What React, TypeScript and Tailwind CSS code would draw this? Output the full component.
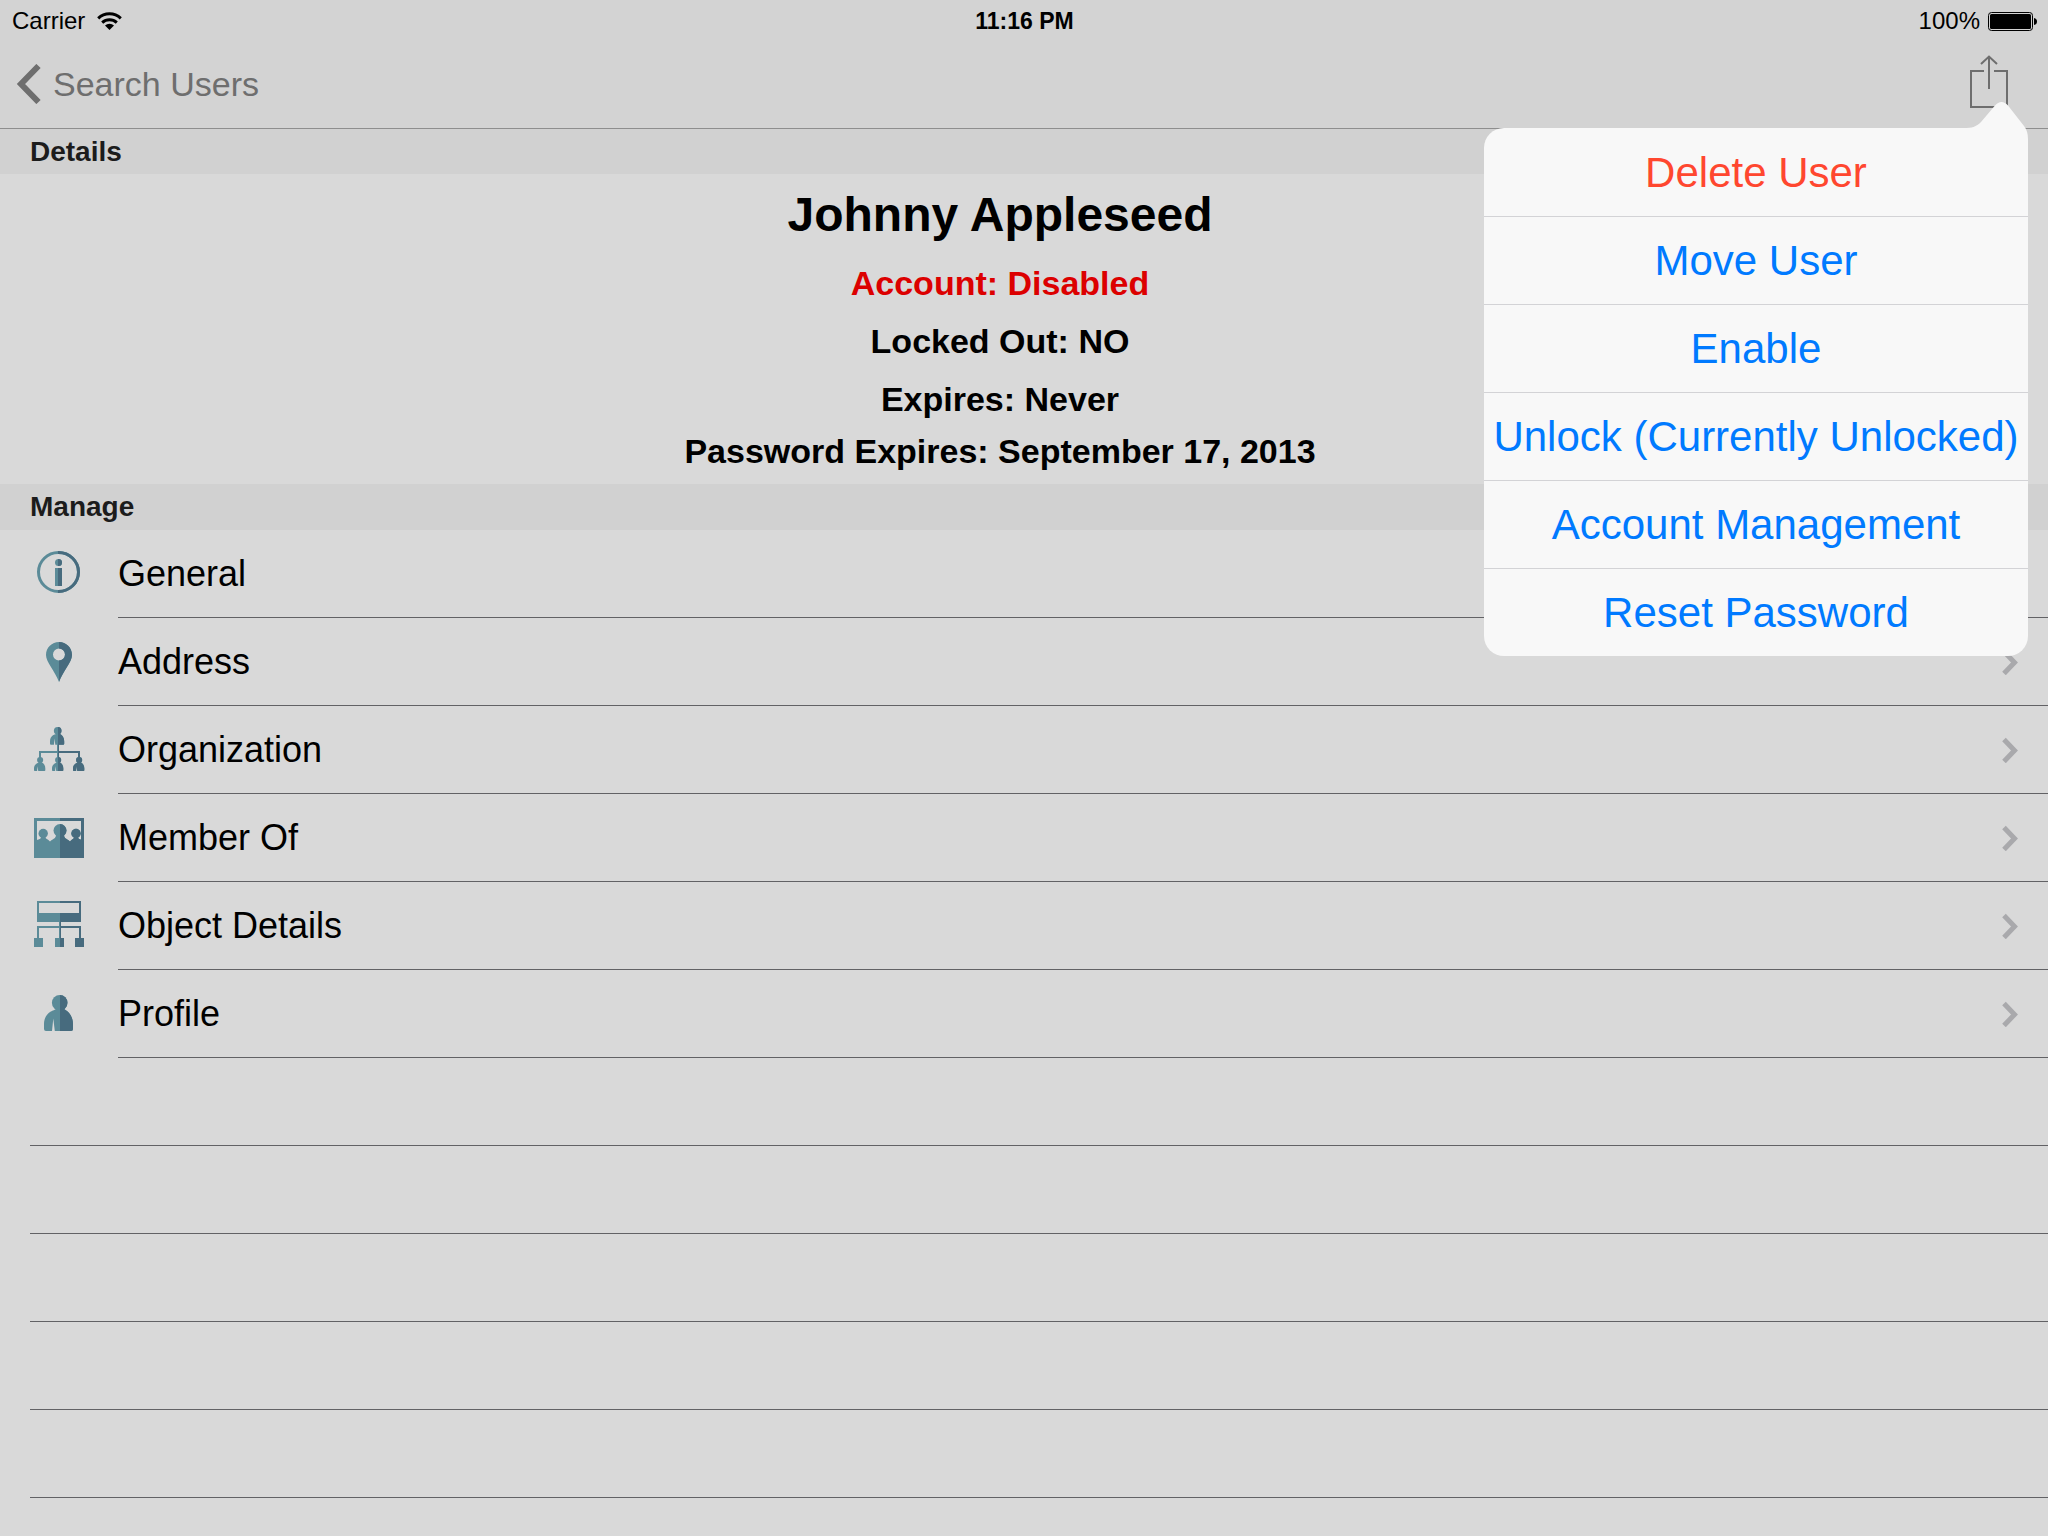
import { ReactNode } from "react";
import clsx from "clsx";

interface Action {
  label: string;
  destructive?: boolean;
}

interface Row {
  label: string;
  href: string;
  icon: ReactNode;
}

const TEAL = "#5b8b98";
const SLATE = "#476b7e";

// Draws its children in teal, then repaints everything right of `split` in slate
function TwoTone({ id, split, children }: { id: string; split: number; children: ReactNode }) {
  return (
    <svg width="50" height="50" viewBox="0 0 50 50" aria-hidden="true" className="shrink-0 overflow-visible">
      <clipPath id={id}>
        <rect x={split} y="-2" width="52" height="54" />
      </clipPath>
      <g fill={TEAL} stroke={TEAL} strokeWidth="0">{children}</g>
      <g clipPath={`url(#${id})`}>
        <g fill={SLATE} stroke={SLATE} strokeWidth="0">{children}</g>
      </g>
    </svg>
  );
}

function Person({ x, y, scale = 1 }: { x: number; y: number; scale?: number }) {
  return (
    <g transform={`translate(${x} ${y}) scale(${scale})`}>
      <circle cx="15.7" cy="7.7" r="7.8" />
      <path d="M11.5 12C13 15 9 15 6 17C2 20 0 24 0 29V34Q0 36 2 36H8L9.3 23.5L10.8 36H27Q29 36 29 34V29C29 22 25 17 21.5 15Q19 14 20 12Z" />
    </g>
  );
}

const rows: Row[] = [
  {
    label: "General",
    href: "#general",
    icon: (
      <TwoTone id="general" split={24}>
        <ellipse cx="24.5" cy="23" rx="20" ry="19.5" fill="none" strokeWidth="3" />
        <circle cx="24.5" cy="13.5" r="3.5" />
        <rect x="21" y="19" width="7" height="18" />
      </TwoTone>
    ),
  },
  {
    label: "Address",
    href: "#address",
    icon: (
      <TwoTone id="address" split={25}>
        <path
          fillRule="evenodd"
          d="M25 5C32 5 38 10.500 38 18C38 25 29 34 25 45C21 34 12 25 12 18C12 10.500 18 5 25 5ZM25 11.500A6 6 0 1 0 25 23.500A6 6 0 1 0 25 11.500Z"
        />
      </TwoTone>
    ),
  },
  {
    label: "Organization",
    href: "#organization",
    icon: (
      <TwoTone id="organization" split={24}>
        <Person x={16} y={2} scale={0.49} />
        <rect x="23" y="19" width="2" height="14" />
        <path d="M5 33V26H46V33H44V28H7V33Z" />
        <Person x={0} y={32} scale={0.39} />
        <Person x={18} y={32} scale={0.39} />
        <Person x={39} y={32} scale={0.39} />
      </TwoTone>
    ),
  },
  {
    label: "Member Of",
    href: "#member-of",
    icon: (
      <TwoTone id="member" split={26}>
        <path fillRule="evenodd" d="M0 5H50V45H0ZM3 8V42H47V8Z" />
        <circle cx="26" cy="17.500" r="6.500" />
        <circle cx="9.200" cy="20.500" r="4.700" />
        <circle cx="42" cy="20.500" r="4.700" />
        <path d="M3 27C5 26 7 26 7 24H11.500C11.500 26 14 26 16 28.500C18 26 22 26 22 22H30C30 26 34 26 36 28.500C38 26 40 26 40 24H44C44 26 46 26 48 27V45H3Z" />
      </TwoTone>
    ),
  },
  {
    label: "Object Details",
    href: "#object-details",
    icon: (
      <TwoTone id="object" split={26}>
        <path fillRule="evenodd" d="M3 0H47V21H3ZM5 2V12H45V2Z" />
        <rect x="25" y="21" width="2" height="17" />
        <path d="M3 38V25H47V38H45V27H5V38Z" />
        <rect x="0" y="37" width="9" height="9" />
        <rect x="21" y="37" width="9" height="9" />
        <rect x="41" y="37" width="9" height="9" />
      </TwoTone>
    ),
  },
  {
    label: "Profile",
    href: "#profile",
    icon: (
      <TwoTone id="profile" split={26}>
        <Person x={10} y={6} />
      </TwoTone>
    ),
  },
];

const actions: Action[] = [
  { label: "Delete User", destructive: true },
  { label: "Move User" },
  { label: "Enable" },
  { label: "Unlock (Currently Unlocked)" },
  { label: "Account Management" },
  { label: "Reset Password" },
];

const emptyRows = [1, 2, 3, 4, 5];

function StatusBar() {
  return (
    <div className="grid h-10 grid-cols-3 items-center pt-0.5 pr-[11px] pl-3 text-2xl leading-8">
      <div className="flex items-center gap-3">
        <span>Carrier</span>
        <svg width="25" height="18" viewBox="0 0 25 18" aria-hidden="true">
          <path d="M1.200 6.300A16.500 16.500 0 0 1 23.800 6.300" fill="none" stroke="#000" strokeWidth="3" />
          <path d="M5.200 10.600A10.800 10.800 0 0 1 19.800 10.600" fill="none" stroke="#000" strokeWidth="3" />
          <path d="M8 13.600A6.600 6.600 0 0 1 17 13.600L12.500 18Z" />
        </svg>
      </div>
      <span className="text-center text-[23px] font-bold">11:16 PM</span>
      <div className="flex items-center justify-end gap-2">
        <span>100%</span>
        <svg width="49" height="19" viewBox="0 0 49 19" aria-hidden="true">
          <rect x="0.500" y="0.500" width="44" height="18" rx="3" fill="none" stroke="#000" />
          <rect x="2" y="2" width="41" height="15" rx="1.500" />
          <path d="M46 6Q49 6.500 49 9.500T46 13Z" />
        </svg>
      </div>
    </div>
  );
}

function SectionHeader({ title, ruled }: { title: string; ruled?: boolean }) {
  return (
    <h2
      className={clsx(
        "flex h-[46px] items-center bg-[#d1d1d1] px-[30px] text-[28px] font-bold text-[#1c1c1c]",
        ruled && "border-t border-[#8e8e8e]"
      )}
    >
      {title}
    </h2>
  );
}

function ActionMenu() {
  return (
    <div className="absolute top-full right-5 z-10 w-[544px] rounded-[20px] bg-[#f8f8f8]">
      <svg width="64" height="48" viewBox="0 0 64 48" aria-hidden="true" className="absolute right-0 -top-[26px]">
        <path d="M0 26C8 26 12 25 17 20L31 3.500Q34 0 37.500 0Q41 0 44 3.500L60 24Q64 29 64 37V48H0Z" fill="#f8f8f8" />
      </svg>
      <div role="menu" aria-label="User actions" className="relative">
        {actions.map((a) => (
          <button
            key={a.label}
            type="button"
            role="menuitem"
            className={clsx(
              "block h-[88px] w-full border-t border-[#d3d3d6] text-center text-[42px] whitespace-nowrap first:border-transparent",
              a.destructive ? "text-[#ff472f]" : "text-[#007aff]"
            )}
          >
            {a.label}
          </button>
        ))}
      </div>
    </div>
  );
}

export default function App() {
  return (
    <div className="min-h-screen bg-[#d9d9d9] font-['Liberation_Sans',Arial,sans-serif] text-black">
      <header className="relative bg-[#d3d3d3]">
        <StatusBar />
        <nav className="flex h-[88px] items-center justify-between pr-10 pl-4">
          <a href="#search" className="flex items-center gap-3 text-[34px] text-[#6e6e6e]">
            <svg width="25" height="40" viewBox="0 0 25 40" aria-hidden="true">
              <path d="M22.500 2L5 20L22.500 38" fill="none" stroke="currentColor" strokeWidth="6" />
            </svg>
            Search Users
          </a>
          <button type="button" aria-label="Actions" className="text-[#6e6e6e]">
            <svg width="38" height="58" viewBox="0 0 38 58" fill="none" stroke="currentColor" strokeWidth="2">
              <path d="M14 16H1V52H37V16H24" />
              <path d="M19 34V1.500M11 9L19 1.500L27 9" />
            </svg>
          </button>
        </nav>
        <ActionMenu />
      </header>

      <main>
        <SectionHeader title="Details" ruled />
        <section className="pt-0.5 pr-12 pb-[10px] text-center text-[34px] leading-[58px] font-bold">
          <h1 className="text-5xl leading-[78px]">Johnny Appleseed</h1>
          <p className="text-[#dc0000]">Account: Disabled</p>
          <p>Locked Out: NO</p>
          <p>Expires: Never</p>
          <p className="leading-[46px]">Password Expires: September 17, 2013</p>
        </section>

        <SectionHeader title="Manage" />
        <ul>
          {rows.map((row) => (
            <li key={row.label}>
              <a href={row.href} className="flex items-center gap-[34px] pl-[34px]">
                {row.icon}
                <span className="flex h-[88px] flex-1 items-center justify-between border-b border-[#626265] pr-[30px] text-4xl">
                  {row.label}
                  <svg width="16" height="26" viewBox="0 0 16 26" aria-hidden="true">
                    <path d="M2 2.500L12.500 13.500L2 24.500" fill="none" stroke="#a9a9ac" strokeWidth="5" />
                  </svg>
                </span>
              </a>
            </li>
          ))}
        </ul>
        {emptyRows.map((n) => (
          <div key={n} className="ml-[30px] h-[88px] border-b border-[#626265]" />
        ))}
      </main>
    </div>
  );
}
